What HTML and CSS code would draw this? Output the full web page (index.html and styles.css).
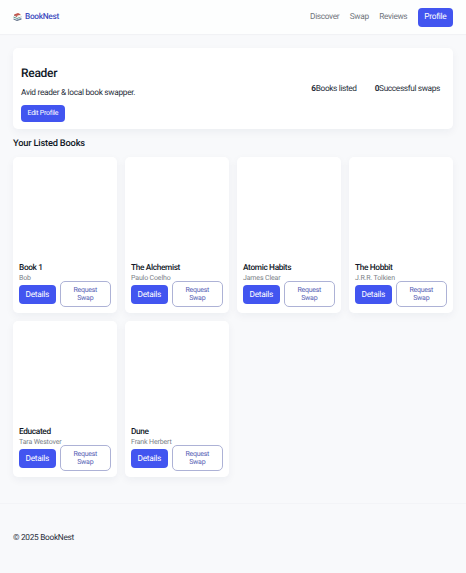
FILE: index.html
```
<!DOCTYPE html>
<html lang="en">
<head>
    <meta charset="UTF-8">
    <meta name="viewport" content="width=device-width, initial-scale=1.0">
    <title>BookNest - Profile</title>
    <link rel="stylesheet" href="styles.css">
</head>
<body>
    <header class="site-header">
        <a class="brand" href="#">
            <svg class="logo" viewBox="0 0 18 16">
                <path d="M2 3 10 0l6 3-8 3z" fill="#c4574c"/>
                <path d="M2 3v2l6 3V6z" fill="#a34a44"/>
                <path d="m8 6 8-3v2L8 8z" fill="#eee6dc"/>
                <path d="m1 7 7 3 9-3v1l-8 4-8-3z" fill="#4c8a82"/>
                <path d="m9 11 8-3v2l-8 2z" fill="#eee6dc"/>
                <path d="m1 11 7 2 8-3 1 1-8 3z" fill="#6a90b5"/>
                <path d="M1 11v2l7 3 9-3v-2l-9 3z" fill="#5f6f86"/>
            </svg>
            <span>BookNest</span>
        </a>
        <nav class="nav">
            <a href="#">Discover</a>
            <a href="#">Swap</a>
            <a href="#">Reviews</a>
            <a href="#" class="btn">Profile</a>
        </nav>
    </header>

    <main class="container">
        <section class="profile">
            <div class="profile-info">
                <h1>Reader</h1>
                <p>Avid reader &amp; local book swapper.</p>
                <button class="btn btn-edit">Edit Profile</button>
            </div>
            <div class="stats">
                <div><strong>6</strong>Books listed</div>
                <div><strong>0</strong>Successful swaps</div>
            </div>
        </section>

        <h2>Your Listed Books</h2>
        <section class="books">
            <article class="book">
                <div class="cover"></div>
                <h3>Book 1</h3>
                <p class="author">Bob</p>
                <div class="actions">
                    <button class="btn">Details</button>
                    <button class="btn-outline">Request Swap</button>
                </div>
            </article>
            <article class="book">
                <div class="cover"></div>
                <h3>The Alchemist</h3>
                <p class="author">Paulo Coelho</p>
                <div class="actions">
                    <button class="btn">Details</button>
                    <button class="btn-outline">Request Swap</button>
                </div>
            </article>
            <article class="book">
                <div class="cover"></div>
                <h3>Atomic Habits</h3>
                <p class="author">James Clear</p>
                <div class="actions">
                    <button class="btn">Details</button>
                    <button class="btn-outline">Request Swap</button>
                </div>
            </article>
            <article class="book">
                <div class="cover"></div>
                <h3>The Hobbit</h3>
                <p class="author">J.R.R. Tolkien</p>
                <div class="actions">
                    <button class="btn">Details</button>
                    <button class="btn-outline">Request Swap</button>
                </div>
            </article>
            <article class="book">
                <div class="cover"></div>
                <h3>Educated</h3>
                <p class="author">Tara Westover</p>
                <div class="actions">
                    <button class="btn">Details</button>
                    <button class="btn-outline">Request Swap</button>
                </div>
            </article>
            <article class="book">
                <div class="cover"></div>
                <h3>Dune</h3>
                <p class="author">Frank Herbert</p>
                <div class="actions">
                    <button class="btn">Details</button>
                    <button class="btn-outline">Request Swap</button>
                </div>
            </article>
        </section>
    </main>

    <footer class="site-footer">© 2025 BookNest</footer>
</body>
</html>
```
FILE: styles.css
```
* {
    box-sizing: border-box;
}

body {
    margin: 0;
    font-family: Roboto, "Liberation Sans", sans-serif;
    font-size: 8.3px;
    line-height: 12px;
    letter-spacing: -0.3px;
    text-rendering: geometricPrecision;
    color: #292f3b;
    background-color: #f8f9fb;
}

h1, h2, h3, p {
    margin: 0;
    font-weight: 500;
}

a {
    color: inherit;
    text-decoration: none;
}

button {
    font-family: inherit;
    text-rendering: inherit;
    cursor: pointer;
}

.site-header {
    display: flex;
    justify-content: space-between;
    align-items: center;
    height: 34px;
    padding: 0 13px;
    background-color: #fdfefe;
    box-shadow: 0 1px 1px rgba(20, 30, 70, 0.03);
}

.brand {
    display: flex;
    align-items: center;
    gap: 3px;
    font-weight: 500;
    color: #3f4dc0;
}

.logo {
    width: 9px;
    height: 8px;
}

.nav {
    display: flex;
    align-items: center;
    gap: 10.5px;
    letter-spacing: -0.34px;
    color: #70757c;
}

.btn {
    height: 19px;
    padding: 0 6.5px;
    font-size: 8.3px;
    line-height: 19px;
    letter-spacing: -0.26px;
    color: #fff;
    background-color: #4255f0;
    border: none;
    border-radius: 4px;
}

.container {
    padding: 14px 13px 26px;
}

.profile {
    display: flex;
    justify-content: space-between;
    align-items: center;
    height: 81px;
    padding: 0 13px 0 8px;
    background-color: #fff;
    border-radius: 5px;
    box-shadow: 0 3px 9px rgba(20, 30, 70, 0.05);
}

.profile-info {
    padding-top: 10px;
}

h1 {
    margin-bottom: 7px;
    font-size: 12px;
    line-height: 14px;
    color: #111827;
}

.profile-info p {
    margin-bottom: 6px;
    font-weight: 400;
}

.btn-edit {
    display: block;
    height: 17px;
    font-size: 7px;
    line-height: 17px;
}

.stats {
    display: flex;
    gap: 18px;
    letter-spacing: -0.36px;
}

.stats strong {
    font-weight: 700;
}

h2 {
    margin: 8px 0 7px;
    font-size: 9.3px;
    line-height: 13px;
    letter-spacing: -0.2px;
    color: #111827;
}

.books {
    display: grid;
    grid-template-columns: repeat(4, 1fr);
    gap: 8px;
}

.book {
    height: 156px;
    padding: 6px;
    background-color: #fff;
    border-radius: 5px;
    box-shadow: 0 3px 9px rgba(20, 30, 70, 0.05);
}

.cover {
    height: 99px;
}

h3 {
    font-size: 8.3px;
    line-height: 12px;
    letter-spacing: -0.35px;
    color: #111827;
}

.author {
    font-size: 7px;
    font-weight: 400;
    line-height: 8px;
    letter-spacing: -0.15px;
    color: #7b7f87;
}

.actions {
    display: flex;
    align-items: center;
    gap: 4px;
    margin-top: -1px;
}

.actions .btn {
    padding-top: 1px;
    line-height: 18px;
}

.btn-outline {
    flex: 1;
    height: 26px;
    padding: 1px 10px 0;
    font-size: 7px;
    line-height: 7.5px;
    letter-spacing: -0.25px;
    color: #5661b5;
    background-color: #fff;
    border: 1px solid #adb2d6;
    border-radius: 5px;
}

.site-footer {
    padding: 28px 13px 29px;
    border-top: 1px solid #f3f4f7;
}
```
